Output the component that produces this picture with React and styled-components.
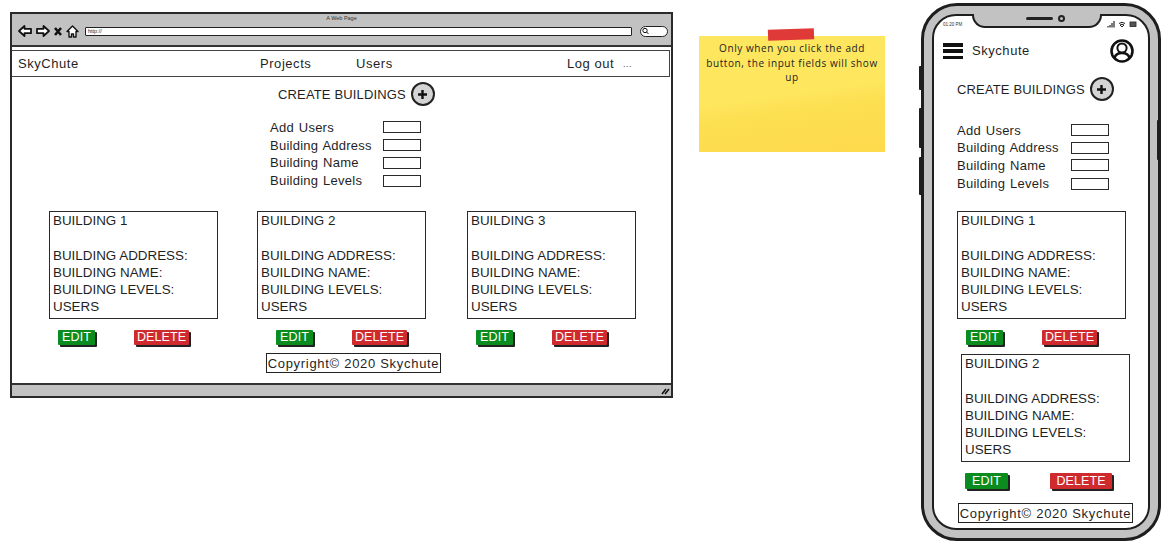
import React from "react";
import styled, { createGlobalStyle } from "styled-components";

const ink = "#1f1f1f";
const gray = "#c2c2c2";
const sans = '"Liberation Sans", Arial, sans-serif';

const Global = createGlobalStyle`
  html, body { margin: 0; padding: 0; background: #fff; }
  * { box-sizing: border-box; }
  body { font-family: ${sans}; color: ${ink}; }
`;

const Canvas = styled.div`
  width: 1167px; height: 547px; overflow: hidden;
  display: flex; align-items: flex-start; padding: 3px 0 0 10px;
`;

/* ---------- browser window ---------- */
const Browser = styled.section`
  width: 663px; height: 386px; margin-top: 9px; flex: none;
  border: 2px solid #2a2a2a; display: flex; flex-direction: column; background: #fff;
`;
const TitleBar = styled.header`
  height: 33px; flex: none; background: ${gray}; border-bottom: 2px solid #333;
  display: flex; flex-direction: column; align-items: center;
`;
const WindowTitle = styled.div`
  font-size: 5.5px; line-height: 8px; height: 11px; color: #333;
`;
const Toolbar = styled.div`
  align-self: stretch; display: flex; align-items: center; gap: 4px; padding: 0 3px 0 6px; height: 12px;
`;
const UrlBar = styled.div`
  flex: 1; height: 9px; margin: 0 4px 0 2px; background: #fff; border: 1.5px solid #222; border-radius: 1px;
  font-size: 5.5px; line-height: 6px; padding-left: 2px;
`;
const SearchPill = styled.div`
  width: 28px; height: 11px; background: #fff; border: 1.5px solid #222; border-radius: 6px;
  display: flex; align-items: center; padding-left: 1px;
`;
const Nav = styled.nav`
  height: 27px; flex: none; margin: 3px 1px 0 0; border: 1.5px solid #444; border-left-width: 0;
  display: grid; grid-template-columns: 242px 96px 211px 56px auto; align-items: center;
  padding-left: 6px; font-size: 13px; letter-spacing: 0.55px;
`;
const Dots = styled.span` font-size: 9px; color: #444; `;
const StatusFooter = styled.div`
  margin-top: auto; height: 13px; flex: none; background: ${gray}; border-top: 2px solid #333;
  display: flex; justify-content: flex-end; align-items: center; padding-right: 1px;
`;

/* ---------- shared screen parts ---------- */
const Heading = styled.div`
  display: flex; align-items: center; gap: ${p => p.$gap}px;
  margin: ${p => p.$top}px 0 0 ${p => p.$left}px;
  font-size: 13px; letter-spacing: 0.15px; height: 24px;
`;
const AddCircle = styled.button`
  width: 24px; height: 24px; padding: 0; border-radius: 50%;
  border: 2px solid #222; background: #d4d4d4; display: grid; place-items: center; flex: none;
`;
const Form = styled.div`
  display: grid; grid-template-columns: ${p => p.$label}px 38px; grid-template-rows: ${p => p.$rows}; align-items: center;
  margin: ${p => p.$top}px 0 0 ${p => p.$left}px;
  font-size: 13px; letter-spacing: 0.25px; word-spacing: 1px;
`;
const Field = styled.div`
  width: 38px; height: 12px; border: 1.5px solid #2a2a2a; background: #fff;
`;
const Columns = styled.div`
  display: flex; margin: ${p => p.$top}px 0 0 ${p => p.$left}px;
`;
const Column = styled.div`
  width: ${p => p.$width}px; flex: none;
`;
const Card = styled.article`
  width: 169px; height: 108px; border: 1.5px solid #2a2a2a; padding: 0 0 0 3px;
  margin: ${p => p.$top || 0}px 0 0 ${p => p.$left || 0}px;
  font-size: 13.4px; line-height: 17.3px; background: #fff;
`;
const CardLine = styled.div` min-height: 17.3px; white-space: nowrap; `;
const ButtonRow = styled.div`
  display: flex; gap: ${p => p.$gap}px; margin: 11px 0 0 ${p => p.$inset}px;
`;
const Btn = styled.button`
  width: ${p => p.$w}px; height: ${p => p.$h}px; padding: 0; border: 0; border-radius: 1px;
  background: ${p => p.$danger ? "#cf2b2f" : "#0b8c1e"}; color: #fff;
  font: 12.5px/1 ${sans}; letter-spacing: 0.1px;
  box-shadow: 2px 2px 0 #222;
`;
const Copyright = styled.footer`
  width: 175px; height: 20px; border: 1.5px solid #222; margin: ${p => p.$top}px 0 0 ${p => p.$left}px;
  display: flex; align-items: center; justify-content: center; white-space: nowrap;
  font-size: 13px; letter-spacing: 0.7px;
`;

/* ---------- sticky note ---------- */
const Sticky = styled.aside`
  position: relative; width: 186px; height: 116px; flex: none; margin: 33px 0 0 26px;
  background: linear-gradient(172deg, #fee65e 0%, #fee75f 48%, #fddf52 62%, #fdda4c 100%);
  padding-top: 5px; text-align: center;
  font-family: "Open Sans", sans-serif; font-size: 10px; line-height: 14.5px; letter-spacing: 0.58px; color: #222;
`;
const Tape = styled.div`
  position: absolute; left: 69px; top: -7px; width: 46px; height: 11px;
  background: #e03a38; transform: rotate(-2deg);
`;

/* ---------- phone ---------- */
const Phone = styled.section`
  position: relative; width: 240px; height: 538px; flex: none; margin-left: 36px;
  border: 3px solid #1e1e1e; border-radius: 36px; background: ${gray}; padding: 8px;
`;
const SideKey = styled.span`
  position: absolute; width: 3px; background: #1e1e1e; border-radius: 1px;
  top: ${p => p.$top}px; height: ${p => p.$h}px;
  ${p => p.$right ? "right: -2px;" : "left: -5px;"}
`;
const Screen = styled.div`
  height: 100%; border: 2px solid #1e1e1e; border-radius: 24px; background: #fff;
  display: flex; flex-direction: column; overflow: hidden;
`;
const Notch = styled.div`
  position: absolute; left: 48px; top: 8px; width: 130px; height: 14px;
  background: ${gray}; border: 2px solid #1e1e1e; border-top: 0; border-radius: 0 0 13px 13px;
`;
const SpeakerCam = styled.div`
  position: absolute; left: 52px; top: 0; display: flex; align-items: center; gap: 5px; height: 8px;
  & > i:first-child { width: 27px; height: 3px; background: #222; border-radius: 2px; }
  & > i:last-child { width: 7px; height: 7px; border: 2px solid #222; border-radius: 50%; }
`;
const StatusRow = styled.div`
  height: 16px; flex: none; display: flex; justify-content: space-between; align-items: center;
  padding: 0 11px 0 9px; font-size: 4.5px; color: #333;
`;
const PhoneHeader = styled.div`
  height: 26px; margin-top: 6px; flex: none; display: flex; align-items: center; padding: 0 14px 0 9px;
  font-size: 13px; letter-spacing: 0.55px;
`;
const Burger = styled.div`
  width: 20px; height: 16px; margin-right: 9px; display: flex; flex-direction: column; justify-content: space-between;
  & > i { display: block; height: 3.5px; background: #111; }
`;
const Brand = styled.span` flex: 1; margin-top: -2px; `;

/* ---------- icons ---------- */
const Arrow = ({ flip }) => (
  <svg width="14" height="12" viewBox="0 0 14 12" style={flip ? { transform: "scaleX(-1)" } : undefined}>
    <path d="M1 6 6.500 1v2.800H13v4.400H6.500V11z" fill="#fff" stroke="#111" strokeWidth="1.800" strokeLinejoin="round" />
  </svg>
);
const CloseX = () => (
  <svg width="8" height="9" viewBox="0 0 8 9"><path d="M1 1l6 7M7 1 1 8" stroke="#111" strokeWidth="2.600" /></svg>
);
const Home = () => (
  <svg width="13" height="13" viewBox="0 0 13 13">
    <path d="M6.500 1 12 6.500H10V12H7.500V9h-2v3H3V6.500H1z" fill="#fff" stroke="#111" strokeWidth="1.400" strokeLinejoin="round" />
  </svg>
);
const Lens = () => (
  <svg width="7" height="8" viewBox="0 0 7 8" fill="none" stroke="#111" strokeWidth="1">
    <circle cx="3" cy="3.500" r="2.200" /><path d="M4.600 5 6.500 7" />
  </svg>
);
const Plus = () => (
  <svg width="11" height="11" viewBox="0 0 11 11"><path d="M5.500 1v9M1 5.500h9" stroke="#111" strokeWidth="2.400" /></svg>
);
const Grip = () => (
  <svg width="9" height="8" viewBox="0 0 9 8"><path d="M1 7 5 2M4 7l4-5" stroke="#111" strokeWidth="1.600" /></svg>
);
const Avatar = () => (
  <svg width="24" height="24" viewBox="0 0 24 24" fill="none" stroke="#111" strokeWidth="2.600">
    <circle cx="12" cy="12" r="10.500" />
    <path d="M4.500 19c1-3.600 4-5 7.500-5s6.500 1.400 7.500 5" fill="#fff" />
    <circle cx="12" cy="9" r="4.600" fill="#fff" strokeWidth="2" />
  </svg>
);
const StatusIcons = () => (
  <svg width="30" height="8" viewBox="0 0 30 8" fill="none" stroke="#222">
    <path d="M1 7.500V6M3 7.500V5M5 7.500V3M7 7.500V1" strokeWidth="1.200" />
    <path d="M12 3.500q3-2.500 6 0M15 7l-2-2q2-1.500 4 0z" strokeWidth="1" />
    <rect x="23" y="2" width="6" height="4.500" fill="#555" strokeWidth=".8" />
  </svg>
);

/* ---------- data-driven parts ---------- */
const labels = ["Add Users", "Building Address", "Building Name", "Building Levels"];

const CreateHeading = ({ left, top, gap }) => (
  <Heading $left={left} $top={top} $gap={gap}>
    CREATE BUILDINGS
    <AddCircle aria-label="add"><Plus /></AddCircle>
  </Heading>
);
const BuildingForm = ({ left, top, label, rows }) => (
  <Form $left={left} $top={top} $label={label} $rows={rows}>
    {labels.map(l => (
      <React.Fragment key={l}><span>{l}</span><Field /></React.Fragment>
    ))}
  </Form>
);
const Building = ({ n, left, top }) => (
  <Card $left={left} $top={top}>
    <CardLine>BUILDING {n}</CardLine>
    <CardLine />
    <CardLine>BUILDING ADDRESS:</CardLine>
    <CardLine>BUILDING NAME:</CardLine>
    <CardLine>BUILDING LEVELS:</CardLine>
    <CardLine>USERS</CardLine>
  </Card>
);
const Actions = ({ inset, gap = 39, edit = 37, del = 55, h = 15 }) => (
  <ButtonRow $inset={inset} $gap={gap}>
    <Btn $w={edit} $h={h}>EDIT</Btn>
    <Btn $w={del} $h={h} $danger>DELETE</Btn>
  </ButtonRow>
);

export default function App() {
  return (
    <Canvas>
      <Global />
      <Browser>
        <TitleBar>
          <WindowTitle>A Web Page</WindowTitle>
          <Toolbar>
            <Arrow /><Arrow flip /><CloseX /><Home />
            <UrlBar>http://</UrlBar>
            <SearchPill><Lens /></SearchPill>
          </Toolbar>
        </TitleBar>
        <Nav>
          <span>SkyChute</span><span>Projects</span><span>Users</span><span>Log out</span><Dots>...</Dots>
        </Nav>
        <CreateHeading left={266} top={5} gap={5} />
        <BuildingForm left={258} top={12} label={113} rows="18px 18px 17px 19px" />
        <Columns $left={37} $top={21}>
          <Column $width={208}><Building n={1} /><Actions inset={9} /></Column>
          <Column $width={210}><Building n={2} /><Actions inset={19} /></Column>
          <Column $width={169}><Building n={3} /><Actions inset={9} /></Column>
        </Columns>
        <Copyright $left={254} $top={8}>Copyright© 2020 Skychute</Copyright>
        <StatusFooter><Grip /></StatusFooter>
      </Browser>

      <Sticky>
        <Tape />
        Only when you click the add<br />button, the input fields will show<br />up
      </Sticky>

      <Phone>
        <SideKey $top={60} $h={24} />
        <SideKey $top={102} $h={40} />
        <SideKey $top={151} $h={38} />
        <SideKey $right $top={114} $h={40} />
        <Screen>
          <StatusRow><span>01:20 PM</span><StatusIcons /></StatusRow>
          <PhoneHeader>
            <Burger><i /><i /><i /></Burger>
            <Brand>Skychute</Brand>
            <Avatar />
          </PhoneHeader>
          <CreateHeading left={23} top={13} gap={5} />
          <BuildingForm left={23} top={20} label={114} rows="18px 17px 18px 19px" />
          <Columns $left={23} $top={18}>
            <Column $width={190}>
              <Building n={1} />
              <Actions inset={9} />
              <Building n={2} left={4} top={9} />
              <Actions inset={8} gap={42} edit={43} del={62} h={16} />
            </Column>
          </Columns>
          <Copyright $left={24} $top={14}>Copyright© 2020 Skychute</Copyright>
        </Screen>
        <Notch><SpeakerCam><i /><i /></SpeakerCam></Notch>
      </Phone>
    </Canvas>
  );
}
